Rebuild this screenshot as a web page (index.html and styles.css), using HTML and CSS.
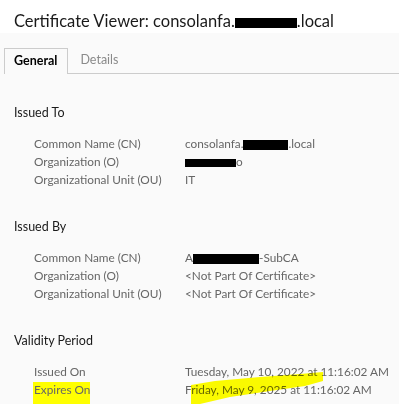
FILE: index.html
```html
<!DOCTYPE html>
<html lang="en">
<head>
  <meta charset="UTF-8">
  <title>Certificate Viewer</title>
  <link rel="stylesheet" href="styles.css">
</head>
<body>
  <header class="title-bar">
    <h1>Certificate Viewer: consolanfa.<span class="redact redact-title"></span>.local</h1>
  </header>

  <main class="panel">
    <nav class="tabs">
      <div class="tab active">General</div>
      <div class="tab">Details</div>
      <div class="tab-rest"></div>
    </nav>

    <section class="section">
      <h2>Issued To</h2>
      <div class="fields">
        <div class="label">Common Name (CN)</div>
        <div class="value">consolanfa.<span class="redact redact-cn"></span>.local</div>
        <div class="label">Organization (O)</div>
        <div class="value"><span class="redact redact-org"></span>o</div>
        <div class="label">Organizational Unit (OU)</div>
        <div class="value">IT</div>
      </div>
    </section>

    <section class="section">
      <h2>Issued By</h2>
      <div class="fields">
        <div class="label">Common Name (CN)</div>
        <div class="value">A<span class="redact redact-ca"></span>-SubCA</div>
        <div class="label">Organization (O)</div>
        <div class="value">&lt;Not Part Of Certificate&gt;</div>
        <div class="label">Organizational Unit (OU)</div>
        <div class="value">&lt;Not Part Of Certificate&gt;</div>
      </div>
    </section>

    <section class="section">
      <h2>Validity Period</h2>
      <div class="fields">
        <div class="label">Issued On</div>
        <div class="value">Tuesday, May 10, 2022 at 11:16:02 AM</div>
        <div class="label marked">Expires On</div>
        <div class="value">Friday, May 9, 2025 at 11:16:02 AM</div>
      </div>
    </section>
  </main>

  <!-- hand drawn highlighter stroke over the expiry date -->
  <svg class="marker" width="399" height="404" viewBox="0 0 399 404">
    <polygon points="191,385 215,381 260,377 300,374 323,372 323,381 305,386 270,391 230,397 200,404 191,404" fill="#ffff00" />
  </svg>
</body>
</html>
```

FILE: styles.css
```css
html,
body {
  overflow: hidden;
}
body {
  margin: 0;
  font-family: Lato, "Noto Sans", sans-serif;
  background-color: #fafafa;
  color: #202124;
  height: 404px;
}
.title-bar {
  background-color: #ffffff;
  height: 33px;
  padding-left: 14px;
}
.title-bar h1 {
  margin: 0;
  font-size: 16.5px;
  font-weight: normal;
  line-height: 42px;
  color: #1a1a1a;
  white-space: nowrap;
}
.redact {
  background-color: #000000;
  display: inline-block;
  vertical-align: middle;
}
.redact-title {
  width: 62px;
  height: 10px;
  margin-top: 1px;
}
.redact-cn {
  width: 45px;
  height: 10px;
}
.redact-org {
  width: 51px;
  height: 8px;
}
.redact-ca {
  width: 66px;
  height: 10px;
}
.panel {
  padding-top: 15px;
}
.tabs {
  display: flex;
  padding-left: 4px;
  height: 26px;
  font-size: 12.5px;
}
.tab {
  padding: 0 12px 0 12px;
  line-height: 24px;
  color: #8a8a8a;
  border-bottom: 1px solid #cccccc;
}
.tab.active {
  color: #000000;
  font-weight: bold;
  border: 1px solid #cccccc;
  border-bottom: none;
  padding: 0 10px 0 9px;
}
.tab-rest {
  flex: 1;
  border-bottom: 1px solid #cccccc;
}
.section {
  padding-left: 14px;
}
.section:first-of-type {
  padding-top: 30px;
}
.section h2 {
  margin: 0 0 13px 0;
  font-size: 12.5px;
  font-weight: normal;
  line-height: 18px;
  color: #1a1a1a;
}
.fields {
  display: grid;
  grid-template-columns: 151px 1fr;
  padding-left: 20px;
  margin-bottom: 29px;
  font-size: 11.8px;
  line-height: 18px;
  color: #666666;
}
.section:last-of-type .fields {
  margin-bottom: 0;
}
.label,
.value {
  white-space: nowrap;
}
.label.marked {
  background-color: #ffff00;
  width: 56px;
  margin-left: -1px;
  padding-left: 1px;
  height: 22px;
  margin-top: 1px;
  line-height: 16px;
}
.marker {
  position: absolute;
  left: 0;
  top: 0;
  pointer-events: none;
  mix-blend-mode: multiply;
}
```
